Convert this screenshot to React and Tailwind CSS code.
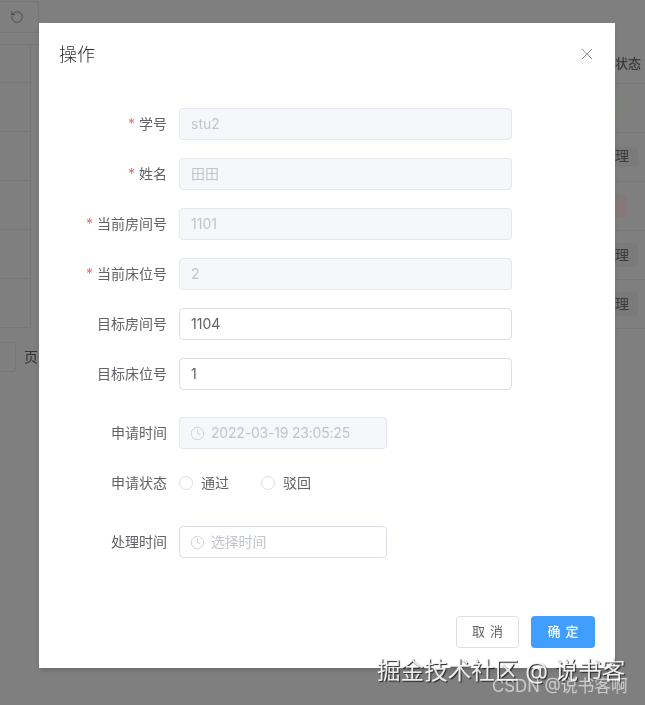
import { RotateCcw, Clock } from 'lucide-react';

const font = { fontFamily: '"Inter", "Noto Sans CJK SC", sans-serif' };

const LEFT_ROWS = ['h-[38px]', 'h-[49px]', 'h-[49px]', 'h-[49px]', 'h-[49px]', 'h-[49px]'];

const FIELDS = [
  { label: '学号', value: 'stu2', required: true, disabled: true },
  { label: '姓名', value: '田田', required: true, disabled: true },
  { label: '当前房间号', value: '1101', required: true, disabled: true },
  { label: '当前床位号', value: '2', required: true, disabled: true },
  { label: '目标房间号', value: '1104' },
  { label: '目标床位号', value: '1' },
];

function Label({ children, required }) {
  return (
    <div className="w-[140px] shrink-0 pr-3 text-right text-sm text-[#606266]">
      {required && <span className="mr-1 text-[#f56c6c]">*</span>}
      {children}
    </div>
  );
}

function TextField({ label, value, required, disabled }) {
  return (
    <div className="flex h-8 items-center">
      <Label required={required}>{label}</Label>
      <div
        className={`flex h-8 w-[333px] items-center rounded border px-[11px] text-sm ${
          disabled
            ? 'border-[#e4e7ed] bg-[#f5f7fa] text-[#c0c4cc]'
            : 'border-[#dcdfe6] bg-white text-[#606266]'
        }`}
      >
        {value}
      </div>
    </div>
  );
}

function DateField({ value, placeholder, disabled }) {
  return (
    <div
      className={`flex h-8 w-[208px] items-center gap-[6px] rounded border pl-[10px] text-sm tracking-[-0.2px] text-[#c0c4cc] ${
        disabled ? 'border-[#e4e7ed] bg-[#f5f7fa]' : 'border-[#dcdfe6] bg-white'
      }`}
    >
      <Clock size={15} strokeWidth={1.1} className="shrink-0" />
      <span>{value || placeholder}</span>
    </div>
  );
}

function Radio({ children }) {
  return (
    <div className="flex items-center gap-[8px] text-sm text-[#606266]">
      <span className="h-[14px] w-[14px] rounded-full border border-[#dcdfe6] bg-white" />
      {children}
    </div>
  );
}

export default function App() {
  return (
    <div className="relative flex h-[705px] w-[645px] justify-between overflow-hidden bg-[#7f7f7f] blur-[0.35px]" style={font}>
      {/* page behind the mask */}
      <div className="w-[39px] shrink-0">
        <div className="mt-[1px] flex h-[32px] items-center justify-end border-b border-[#767676]">
          <div className="flex h-[32px] w-[40px] items-center justify-center rounded-r border border-l-0 border-[#767676] pr-[5px] text-[#3a3a3a]">
            <RotateCcw size={14} strokeWidth={1.25} />
          </div>
        </div>
        <div className="mt-[11px] border-t border-[#767676]">
          {LEFT_ROWS.map((h, i) => (
            <div key={i} className={`${h} w-[31px] border-r border-b border-[#767676]`} />
          ))}
        </div>
        <div className="mt-[14px] flex items-center gap-[8px]">
          <div className="h-[30px] w-[16px] shrink-0 rounded-r border border-l-0 border-[#767676]" />
          <span className="text-sm text-[#333]">页</span>
        </div>
      </div>

      <div className="w-[30px] shrink-0 text-sm text-[#3a3a3a]">
        <div className="flex h-[84px] items-center border-b border-[#767676] pt-[44px]">
          <span className="whitespace-nowrap text-[13px] font-medium">状态</span>
        </div>
        <div className="flex h-[49px] items-center border-b border-[#767676]">
          <div className="h-[20px] w-[12px] rounded-r bg-[#7c817a]" />
        </div>
        <div className="flex h-[49px] items-center border-b border-[#767676]">
          <div className="flex h-[20px] w-[23px] items-center rounded-r bg-[#7a7a7a] pb-[2px] text-sm">理</div>
        </div>
        <div className="flex h-[49px] items-center border-b border-[#767676]">
          <div className="h-[22px] w-[12px] rounded-r bg-[#857878]" />
        </div>
        <div className="flex h-[49px] items-center border-b border-[#767676]">
          <div className="flex h-[24px] w-[23px] items-center rounded-r bg-[#7a7a7a] text-sm">理</div>
        </div>
        <div className="flex h-[49px] items-center border-b border-[#767676]">
          <div className="flex h-[24px] w-[23px] items-center rounded-r bg-[#7a7a7a] text-sm">理</div>
        </div>
      </div>

      {/* dialog */}
      <div className="absolute left-[39px] top-[23px] flex h-[645px] w-[576px] flex-col bg-white shadow-md">
        <div className="flex items-center justify-between pl-5 pr-[22px] pt-5">
          <span className="text-lg font-light leading-6 text-[#303133]">操作</span>
          <svg className="mb-[3px]" width="12" height="12" viewBox="0 0 12 12" fill="none" stroke="#909399" strokeWidth="1">
            <path d="M1 1l10 10M11 1L1 11" />
          </svg>
        </div>

        <div className="mt-[41px] flex flex-col gap-[18px]">
          {FIELDS.map((f) => (
            <TextField key={f.label} {...f} />
          ))}
        </div>

        <div className="mt-[27px] flex h-8 items-center">
          <Label>申请时间</Label>
          <DateField value="2022-03-19 23:05:25" disabled />
        </div>
        <div className="mt-[18px] flex h-8 items-center">
          <Label>申请状态</Label>
          <div className="flex gap-[32px]">
            <Radio>通过</Radio>
            <Radio>驳回</Radio>
          </div>
        </div>
        <div className="mt-[27px] flex h-8 items-center">
          <Label>处理时间</Label>
          <DateField placeholder="选择时间" />
        </div>

        <div className="mt-auto flex justify-end gap-3 pb-5 pr-5">
          <button className="h-8 w-[63px] rounded border border-[#dcdfe6] bg-white pl-[5px] text-[13px] tracking-[5px] text-[#606266]">取消</button>
          <button className="h-8 w-[64px] rounded bg-[#409eff] pl-[5px] text-[13px] font-medium tracking-[5px] text-white">确定</button>
        </div>
      </div>

      {/* watermarks, they overlap in the reference too */}
      <div className="absolute left-[377px] top-[657px] whitespace-nowrap text-[23.6px] leading-7 text-white/90 [text-shadow:1px_1px_1px_#222]">
        掘金技术社区 @ 说书客
      </div>
      <div className="absolute left-[492px] top-[676px] whitespace-nowrap text-[16.8px] leading-5 text-white/60">
        CSDN @说书客啊
      </div>
    </div>
  );
}
